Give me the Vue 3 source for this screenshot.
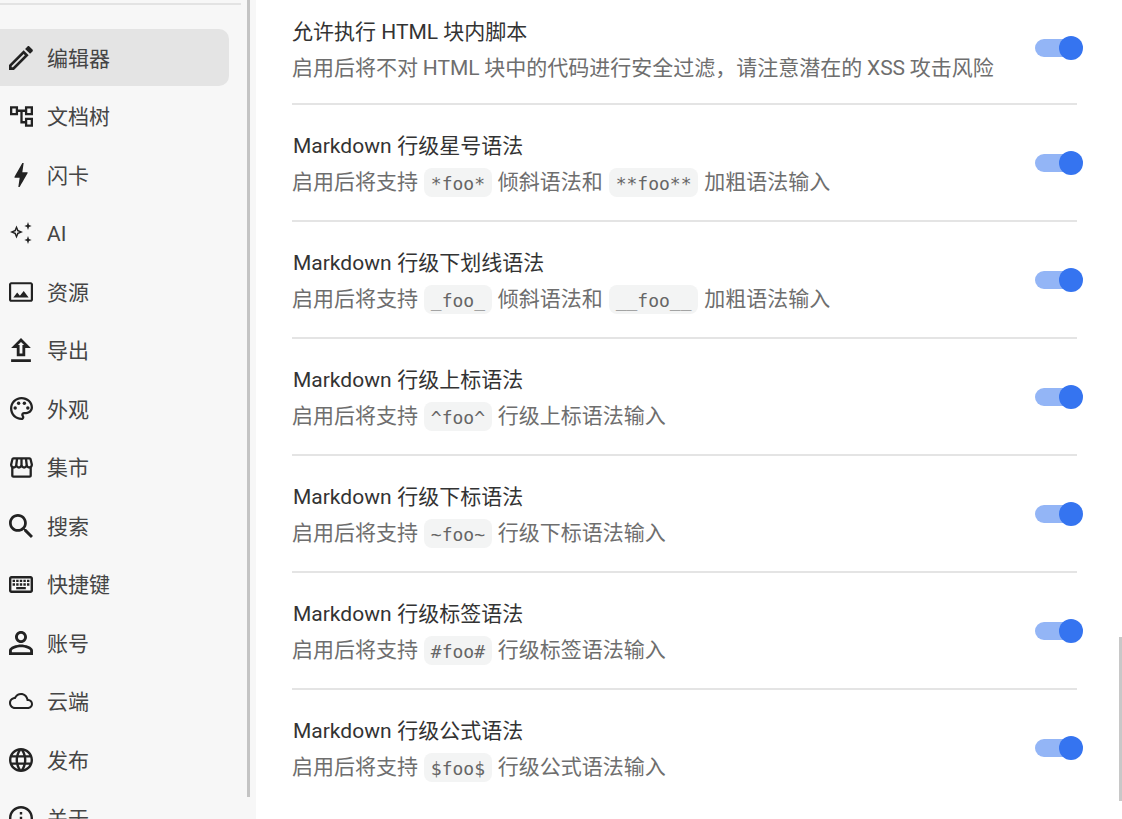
<script setup>
const navItems = [
  { label: '编辑器', active: true, vb: '3 3 18.1 18', h: 24, w: 24, d: 'M14.06 9.02l.92.92L5.92 19H5v-.92l9.06-9.06M17.66 3c-.25 0-.51.1-.7.29l-1.83 1.83 3.75 3.75 1.83-1.83c.39-.39.39-1.02 0-1.41l-2.34-2.34c-.2-.2-.45-.29-.71-.29zm-3.6 3.19L3 17.25V21h3.75L17.81 9.94l-3.75-3.75z' },
  { label: '文档树', vb: '2 3 20 18', h: 21, w: 23, d: 'M22 11V3h-7v3H9V3H2v8h7V8h2v10h4v3h7v-8h-7v3h-2V8h2v3h7zM7 9H4V5h3v4zm10 6h3v4h-3v-4zm0-10h3v4h-3V5z' },
  { label: '闪卡', vb: '7 3 10 18', h: 24, w: 14, d: 'M11 21h-1l1-7H7.5c-.58 0-.57-.32-.38-.66.19-.34.05-.08.07-.12C8.48 10.94 10.42 7.54 13 3h1l-1 7h3.5c.49 0 .56.33.47.51l-.07.15C12.96 17.55 11 21 11 21z' },
  { label: 'AI', vb: '0 0 22 22', h: 22, w: 22, d: 'M6.500 3.500L8.400 8.100 13 10 8.400 11.900 6.500 16.500 4.600 11.900 0 10 4.600 8.100zM6.500 7L5.800 9.300 3.500 10 5.800 10.700 6.500 13 7.200 10.700 9.500 10 7.200 9.300zM18 0L19 3 21.700 4 19 5 18 8 17 5 14.300 4 17 3zM18 14L19 17 21.700 18 19 19 18 22 17 19 14.300 18 17 17z' },
  { label: '资源', vb: '1 3 22 18', h: 20, w: 24, d: 'M21 3H3C2 3 1 4 1 5v14c0 1.100.9 2 2 2h18c1 0 2-1 2-2V5c0-1-1-2-2-2zm0 15.920c-.02.03-.06.06-.08.08H3V5.080L3.080 5h17.830c.03.02.06.06.08.08v13.840zm-10-3.410L8.500 12.500 5 17h14l-4.500-6z' },
  { label: '导出', vb: '5 3 14 17', h: 24, w: 20, d: 'M9 16h6v-6h4l-7-7-7 7h4v6zm3-10.170L14.170 8H13v6h-2V8H9.830L12 5.830zM5 18h14v2H5z' },
  { label: '外观', vb: '2 2 20 20', h: 23, w: 23, palette: true, d: 'M12 22C6.490 22 2 17.510 2 12S6.490 2 12 2s10 4.040 10 9c0 3.310-2.690 6-6 6h-1.770c-.28 0-.5.22-.5.5 0 .12.05.23.13.33.41.47.64 1.060.64 1.670 0 1.380-1.120 2.500-2.500 2.500zm0-18c-4.410 0-8 3.590-8 8s3.590 8 8 8c.28 0 .5-.22.5-.5 0-.16-.08-.28-.14-.35-.41-.46-.63-1.050-.63-1.650 0-1.380 1.120-2.500 2.500-2.500H16c2.210 0 4-1.790 4-4 0-3.860-3.590-7-8-7z' },
  { label: '集市', vb: '2 3 20 18', h: 21, w: 23, d: 'M21.900 8.890l-1.050-4.370c-.22-.9-1-1.520-1.910-1.520H5.050c-.9 0-1.690.63-1.900 1.520L2.100 8.890c-.24 1.020-.02 2.060.62 2.880.08.11.19.19.28.29V19c0 1.100.9 2 2 2h14c1.100 0 2-.9 2-2v-6.940c.09-.09.2-.18.28-.28.64-.82.87-1.870.62-2.890zm-2.990-3.900l1.050 4.370c.1.42.01.84-.25 1.170-.14.18-.44.47-.94.47-.61 0-1.140-.49-1.210-1.140L16.980 5l1.930-.01zM13 5h1.960l.54 4.520c.05.39-.07.78-.33 1.070-.22.26-.54.41-.95.41-.67 0-1.220-.59-1.220-1.310V5zM8.490 9.520L9.040 5H11v4.690c0 .72-.55 1.310-1.290 1.310-.34 0-.65-.15-.89-.41-.25-.29-.37-.68-.33-1.070zm-4.450-.16L5.050 5h1.970l-.58 4.860c-.08.65-.6 1.140-1.210 1.140-.49 0-.8-.29-.93-.47-.27-.32-.36-.75-.26-1.170zM5 19v-6.030c.08.01.15.03.23.03.87 0 1.660-.36 2.240-.95.6.6 1.400.95 2.310.95.87 0 1.650-.36 2.230-.93.59.57 1.390.93 2.290.93.84 0 1.640-.35 2.240-.95.58.59 1.370.95 2.240.95.08 0 .15-.02.23-.03V19H5z' },
  { label: '搜索', vb: '3 3 17.500 17.500', h: 24, w: 24, d: 'M15.500 14h-.79l-.28-.27C15.410 12.590 16 11.110 16 9.500 16 5.910 13.090 3 9.500 3S3 5.910 3 9.500 5.910 16 9.500 16c1.610 0 3.090-.59 4.230-1.570l.27.28v.79l5 4.990L20.490 19l-4.990-5zm-6 0C7.010 14 5 11.990 5 9.500S7.010 5 9.500 5 14 7.010 14 9.500 11.990 14 9.500 14z' },
  { label: '快捷键', vb: '2 5 20 14', h: 17, w: 24, d: 'M20 7v10H4V7h16m0-2H4c-1.100 0-1.990.9-1.990 2L2 17c0 1.100.9 2 2 2h16c1.100 0 2-.9 2-2V7c0-1.100-.9-2-2-2zm-9 3h2v2h-2zm0 3h2v2h-2zM8 8h2v2H8zm0 3h2v2H8zm-3 0h2v2H5zm0-3h2v2H5zm3 6h8v2H8zm6-3h2v2h-2zm0-3h2v2h-2zm3 3h2v2h-2zm0-3h2v2h-2z' },
  { label: '账号', vb: '4 4 16 16', h: 24, w: 24, d: 'M12 5.900c1.160 0 2.100.94 2.100 2.100s-.94 2.100-2.100 2.100S9.900 9.160 9.900 8s.94-2.100 2.100-2.100m0 9c2.970 0 6.100 1.460 6.100 2.100v1.100H5.900V17c0-.64 3.130-2.100 6.100-2.100M12 4C9.790 4 8 5.790 8 8s1.790 4 4 4 4-1.790 4-4-1.790-4-4-4zm0 9c-2.670 0-8 1.340-8 4v3h16v-3c0-2.660-5.330-4-8-4z' },
  { label: '云端', vb: '0 4 24 16', h: 16, w: 24, d: 'M19.350 10.040C18.670 6.590 15.640 4 12 4 9.110 4 6.600 5.640 5.350 8.040 2.340 8.360 0 10.910 0 14c0 3.310 2.690 6 6 6h13c2.760 0 5-2.240 5-5 0-2.640-2.050-4.780-4.650-4.960zM19 18H6c-2.210 0-4-1.790-4-4 0-2.050 1.530-3.760 3.560-3.970l1.070-.11.5-.95C8.080 7.140 9.940 6 12 6c2.620 0 4.880 1.860 5.390 4.430l.3 1.500 1.530.11c1.560.1 2.780 1.410 2.780 2.960 0 1.650-1.350 3-3 3z' },
  { label: '发布', vb: '2 2 20 20', h: 24, w: 24, d: 'M11.990 2C6.470 2 2 6.480 2 12s4.470 10 9.990 10C17.520 22 22 17.520 22 12S17.520 2 11.990 2zm6.930 6h-2.950c-.32-1.250-.78-2.450-1.380-3.560 1.840.63 3.370 1.910 4.330 3.560zM12 4.040c.83 1.200 1.480 2.530 1.910 3.960h-3.820c.43-1.430 1.080-2.760 1.910-3.960zM4.260 14C4.100 13.360 4 12.690 4 12s.1-1.360.26-2h3.380c-.08.66-.14 1.320-.14 2 0 .68.06 1.340.14 2H4.260zm.82 2h2.950c.32 1.250.78 2.450 1.380 3.560-1.840-.63-3.370-1.900-4.330-3.560zm2.950-8H5.080c.96-1.660 2.490-2.930 4.330-3.560C8.810 5.550 8.350 6.750 8.030 8zM12 19.960c-.83-1.200-1.480-2.530-1.910-3.960h3.820c-.43 1.430-1.080 2.760-1.910 3.960zM14.340 14H9.660c-.09-.66-.16-1.320-.16-2 0-.68.07-1.350.16-2h4.680c.09.65.16 1.320.16 2 0 .68-.07 1.340-.16 2zm.25 5.560c.6-1.110 1.060-2.310 1.380-3.560h2.950c-.96 1.650-2.490 2.930-4.330 3.560zM16.360 14c.08-.66.14-1.320.14-2 0-.68-.06-1.340-.14-2h3.380c.16.64.26 1.310.26 2s-.1 1.360-.26 2h-3.380z' },
  { label: '关于', vb: '2 2 20 20', h: 24, w: 24, d: 'M11 7h2v2h-2zm0 4h2v6h-2zm1-9C6.480 2 2 6.480 2 12s4.480 10 10 10 10-4.480 10-10S17.520 2 12 2zm0 18c-4.410 0-8-3.590-8-8s3.590-8 8-8 8 3.590 8 8-3.590 8-8 8z' },
]

const rows = [
  { title: '允许执行 HTML 块内脚本', plain: true, parts: [{ t: '启用后将不对 HTML 块中的代码进行安全过滤，请注意潜在的 XSS 攻击风险' }] },
  { title: 'Markdown 行级星号语法', parts: [{ t: '启用后将支持 ' }, { c: '*foo*' }, { t: ' 倾斜语法和 ' }, { c: '**foo**' }, { t: ' 加粗语法输入' }] },
  { title: 'Markdown 行级下划线语法', parts: [{ t: '启用后将支持 ' }, { c: '_foo_' }, { t: ' 倾斜语法和 ' }, { c: '__foo__' }, { t: ' 加粗语法输入' }] },
  { title: 'Markdown 行级上标语法', parts: [{ t: '启用后将支持 ' }, { c: '^foo^' }, { t: ' 行级上标语法输入' }] },
  { title: 'Markdown 行级下标语法', parts: [{ t: '启用后将支持 ' }, { c: '~foo~' }, { t: ' 行级下标语法输入' }] },
  { title: 'Markdown 行级标签语法', parts: [{ t: '启用后将支持 ' }, { c: '#foo#' }, { t: ' 行级标签语法输入' }] },
  { title: 'Markdown 行级公式语法', parts: [{ t: '启用后将支持 ' }, { c: '$foo$' }, { t: ' 行级公式语法输入' }] },
]
</script>

<template>
  <div class="page">
    <aside class="sidebar">
      <div class="rule"></div>
      <nav class="nav">
        <div v-for="item in navItems" :key="item.label" class="nav-item" :class="{ active: item.active }">
          <span class="icon-box">
            <svg :viewBox="item.vb" :width="item.w" :height="item.h" fill="currentColor" fill-rule="evenodd">
              <path :d="item.d" />
              <template v-if="item.palette">
                <circle cx="6.500" cy="11.500" r="1.500" />
                <circle cx="9.500" cy="7.500" r="1.500" />
                <circle cx="14.500" cy="7.500" r="1.500" />
                <circle cx="17.500" cy="11.500" r="1.500" />
              </template>
            </svg>
          </span>
          <span class="nav-label">{{ item.label }}</span>
        </div>
      </nav>
      <div class="side-thumb"></div>
    </aside>
    <main class="content">
      <section v-for="(row, i) in rows" :key="i" class="row" :class="{ plain: row.plain, last: i === rows.length - 1 }">
        <div class="text">
          <div class="title">{{ row.title }}</div>
          <div class="desc">
            <template v-for="(p, j) in row.parts" :key="j">
              <code v-if="p.c" class="code">{{ p.c }}</code>
              <template v-else>{{ p.t }}</template>
            </template>
          </div>
        </div>
        <div class="switch"><span class="track"></span><span class="knob"></span></div>
      </section>
      <div class="main-thumb"></div>
    </main>
  </div>
</template>

<style scoped>
.page {
  display: flex;
  width: 1122px;
  height: 819px;
  overflow: hidden;
  background: #fff;
  font-family: Roboto, "Noto Sans CJK SC", sans-serif;
  word-spacing: 0.6px;
}
.sidebar {
  position: relative;
  flex: 0 0 256px;
  height: 819px;
  overflow: hidden;
  background: #f7f7f7;
  padding-top: 3px;
  box-sizing: border-box;
}
.rule {
  width: 241px;
  height: 2px;
  background: #e3e3e3;
}
.nav {
  display: flex;
  flex-direction: column;
  gap: 1.500px;
  margin-top: 24px;
  width: 229px;
}
.nav-item {
  display: flex;
  flex: 0 0 57px;
  align-items: center;
  border-radius: 0 10px 10px 0;
  color: #454545;
  font-size: 21px;
}
.nav-item.active {
  background: #e4e4e4;
}
.icon-box {
  display: flex;
  flex: 0 0 24px;
  height: 24px;
  margin-left: 9px;
  margin-right: 14px;
  align-items: center;
  justify-content: center;
  color: #222;
}
.nav-label {
  margin-top: 2px;
  line-height: 28px;
}
.side-thumb {
  position: absolute;
  left: 247px;
  top: 0;
  width: 3px;
  height: 797px;
  background: #c4c4c4;
}
.content {
  position: relative;
  flex: 1;
  padding-left: 36px;
  box-sizing: border-box;
}
.row {
  display: flex;
  align-items: center;
  width: 785px;
  height: 117px;
  box-sizing: border-box;
  border-bottom: 2px solid #e4e4e4;
}
.row.plain {
  height: 112px;
  margin-top: -7px;
  word-spacing: 0;
}
.row.last {
  border-bottom-color: transparent;
}
.text {
  flex: 1;
  padding-top: 4px;
}
.plain .text {
  padding-top: 5px;
}
.title {
  padding-left: 1px;
  color: #333;
  font-size: 21px;
  line-height: 28px;
}
.plain .title {
  padding-left: 0;
}
.desc {
  margin-top: 7px;
  color: #6e6e6e;
  font-size: 21px;
  line-height: 30px;
}
.plain .desc {
  word-spacing: -0.5px;
}
.code {
  display: inline-block;
  height: 29px;
  margin-top: 1px;
  padding: 0 7px;
  border-radius: 8px;
  background: #f3f4f4;
  color: #666;
  font-family: "DejaVu Sans Mono", monospace;
  font-size: 18px;
  line-height: 31px;
  vertical-align: top;
}
.switch {
  position: relative;
  flex: 0 0 48px;
  height: 24px;
  margin-right: -6px;
}
.track {
  position: absolute;
  left: 0;
  top: 3px;
  width: 44px;
  height: 18px;
  border-radius: 9px;
  background: #93b5f6;
}
.knob {
  position: absolute;
  right: 0;
  top: 0;
  width: 24px;
  height: 24px;
  border-radius: 50%;
  background: #3574f0;
}
.main-thumb {
  position: absolute;
  right: 0;
  top: 637px;
  width: 3px;
  height: 164px;
  background: #c8c8c8;
}
</style>
